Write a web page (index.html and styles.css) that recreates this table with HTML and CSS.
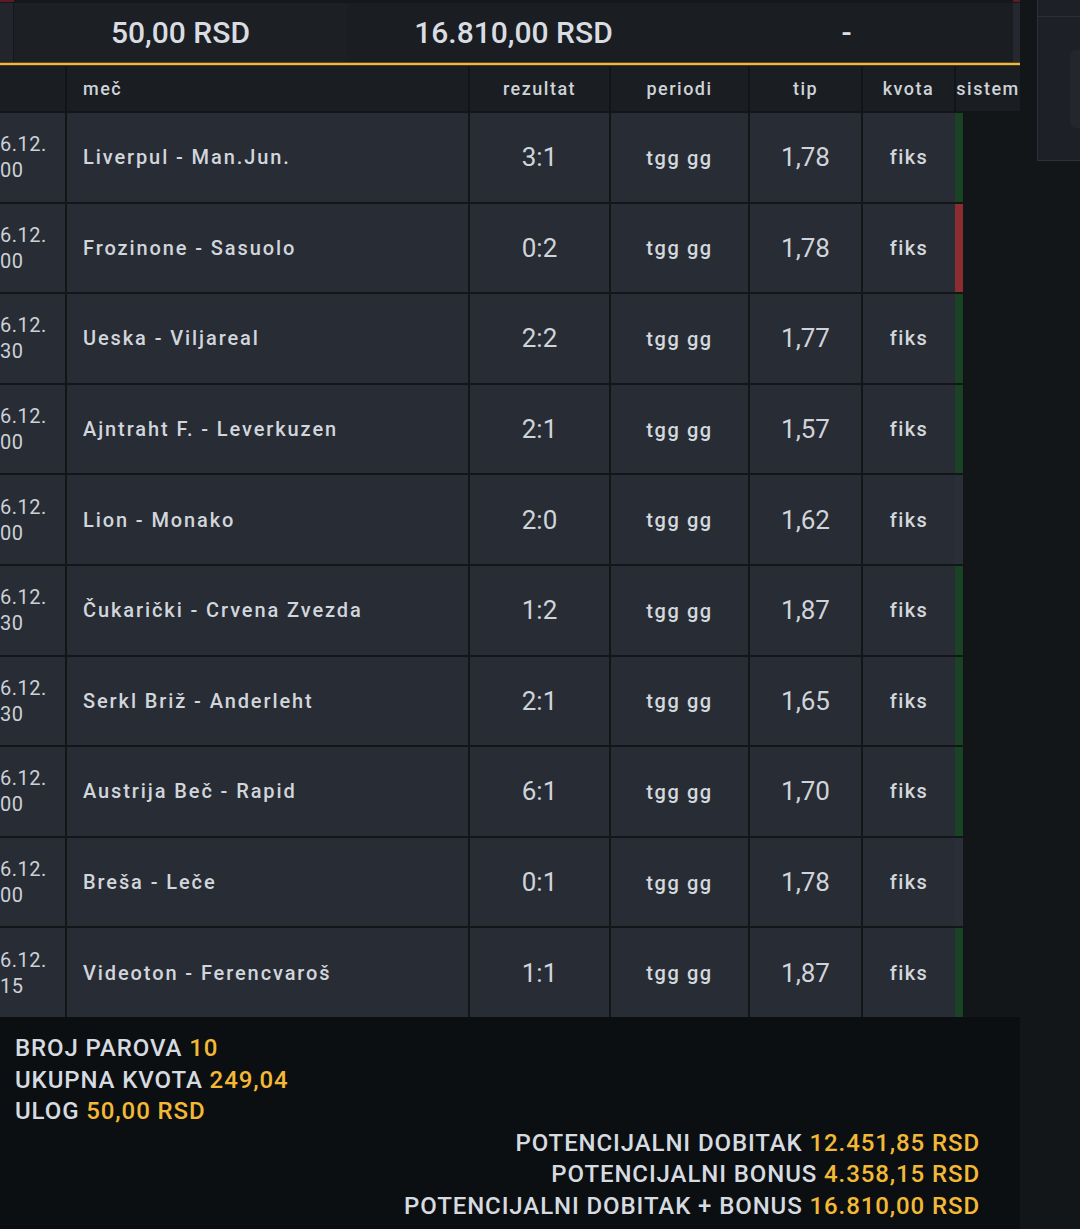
FILE: index.html
```html
<!DOCTYPE html>
<html lang="sr">
<head>
<meta charset="utf-8">
<title>Tiket</title>
<link rel="stylesheet" href="styles.css">
</head>
<body>
<div class="page">
  <main class="ticket">
    <div class="strip"><span class="strip-red"></span><span class="strip-red strip-red-r"></span></div>
    <div class="summary">
      <div class="sum-edge"></div>
      <div class="sum-cell sum-first">50,00 RSD</div>
      <div class="sum-cell">16.810,00 RSD</div>
      <div class="sum-cell">-</div>
      <div class="sum-scroll"></div>
    </div>
    <div class="gold"></div>
    <div class="thead">
      <div class="th"></div>
      <div class="th th-left">meč</div>
      <div class="th">rezultat</div>
      <div class="th">periodi</div>
      <div class="th">tip</div>
      <div class="th">kvota</div>
      <div class="th">sistem</div>
    </div>
    <div class="rows">
      <div class="row">
        <div class="cell date"><span>6.12.</span><span>00</span></div>
        <div class="cell name">Liverpul - Man.Jun.</div>
        <div class="cell num">3:1</div>
        <div class="cell per">tgg gg</div>
        <div class="cell num">1,78</div>
        <div class="cell kv win">fiks</div>
      </div>
      <div class="row">
        <div class="cell date"><span>6.12.</span><span>00</span></div>
        <div class="cell name">Frozinone - Sasuolo</div>
        <div class="cell num">0:2</div>
        <div class="cell per">tgg gg</div>
        <div class="cell num">1,78</div>
        <div class="cell kv lose">fiks</div>
      </div>
      <div class="row">
        <div class="cell date"><span>6.12.</span><span>30</span></div>
        <div class="cell name">Ueska - Viljareal</div>
        <div class="cell num">2:2</div>
        <div class="cell per">tgg gg</div>
        <div class="cell num">1,77</div>
        <div class="cell kv win">fiks</div>
      </div>
      <div class="row">
        <div class="cell date"><span>6.12.</span><span>00</span></div>
        <div class="cell name">Ajntraht F. - Leverkuzen</div>
        <div class="cell num">2:1</div>
        <div class="cell per">tgg gg</div>
        <div class="cell num">1,57</div>
        <div class="cell kv win">fiks</div>
      </div>
      <div class="row">
        <div class="cell date"><span>6.12.</span><span>00</span></div>
        <div class="cell name">Lion - Monako</div>
        <div class="cell num">2:0</div>
        <div class="cell per">tgg gg</div>
        <div class="cell num">1,62</div>
        <div class="cell kv none">fiks</div>
      </div>
      <div class="row">
        <div class="cell date"><span>6.12.</span><span>30</span></div>
        <div class="cell name">Čukarički - Crvena Zvezda</div>
        <div class="cell num">1:2</div>
        <div class="cell per">tgg gg</div>
        <div class="cell num">1,87</div>
        <div class="cell kv win">fiks</div>
      </div>
      <div class="row">
        <div class="cell date"><span>6.12.</span><span>30</span></div>
        <div class="cell name">Serkl Briž - Anderleht</div>
        <div class="cell num">2:1</div>
        <div class="cell per">tgg gg</div>
        <div class="cell num">1,65</div>
        <div class="cell kv win">fiks</div>
      </div>
      <div class="row">
        <div class="cell date"><span>6.12.</span><span>00</span></div>
        <div class="cell name">Austrija Beč - Rapid</div>
        <div class="cell num">6:1</div>
        <div class="cell per">tgg gg</div>
        <div class="cell num">1,70</div>
        <div class="cell kv win">fiks</div>
      </div>
      <div class="row">
        <div class="cell date"><span>6.12.</span><span>00</span></div>
        <div class="cell name">Breša - Leče</div>
        <div class="cell num">0:1</div>
        <div class="cell per">tgg gg</div>
        <div class="cell num">1,78</div>
        <div class="cell kv none">fiks</div>
      </div>
      <div class="row">
        <div class="cell date"><span>6.12.</span><span>15</span></div>
        <div class="cell name">Videoton - Ferencvaroš</div>
        <div class="cell num">1:1</div>
        <div class="cell per">tgg gg</div>
        <div class="cell num">1,87</div>
        <div class="cell kv win">fiks</div>
      </div>
    </div>
    <footer class="totals">
      <div class="tl">BROJ PAROVA <span class="gv">10</span></div>
      <div class="tl">UKUPNA KVOTA <span class="gv">249,04</span></div>
      <div class="tl">ULOG <span class="gv">50,00 RSD</span></div>
      <div class="tl tr">POTENCIJALNI DOBITAK <span class="gv">12.451,85 RSD</span></div>
      <div class="tl tr">POTENCIJALNI BONUS <span class="gv">4.358,15 RSD</span></div>
      <div class="tl tr">POTENCIJALNI DOBITAK + BONUS <span class="gv">16.810,00 RSD</span></div>
    </footer>
  </main>
  <aside class="side">
    <div class="side-top"></div>
    <div class="side-body"><div class="side-btn"></div></div>
  </aside>
</div>
</body>
</html>
```
FILE: styles.css
```css
html, body {
  margin: 0;
  padding: 0;
  background: #131619;
  overflow: hidden;
}
body {
  font-family: Roboto, "Liberation Sans", sans-serif;
  color: #d3d8dd;
  width: 1080px;
  height: 1229px;
}
.page {
  display: flex;
  align-items: flex-start;
  gap: 17px;
  height: 1229px;
}
.ticket {
  width: 1020px;
  flex: none;
  display: flex;
  flex-direction: column;
  height: 1229px;
}
.strip {
  height: 3px;
  background: #15181b;
  display: flex;
  justify-content: space-between;
}
.strip-red {
  width: 14px;
  height: 2px;
  background: #5a1d25;
}
.strip-red-r {
  width: 7px;
}
.summary {
  height: 59px;
  display: grid;
  grid-template-columns: 14px 333px 333px 333px 7px;
  background: #1a1d21;
}
.sum-edge {
  background: #22262c;
  border-right: 1px solid #15181b;
}
.sum-cell {
  display: flex;
  align-items: center;
  justify-content: center;
  font-size: 30px;
  font-weight: 500;
  color: #d9dde2;
}
.sum-first {
  background: #1c1f24;
}
.sum-scroll {
  background: #25292f;
}
.gold {
  height: 4px;
  background: linear-gradient(to bottom, #5e4619 0, #5e4619 25%, #e2ad3c 25%, #f4c65a 55%, #d9a43a 75%, #4a3714 75%, #4a3714 100%);
}
.thead {
  height: 45px;
  display: grid;
  grid-template-columns: 65px 401px 139px 137px 111px 91px 64px;
  column-gap: 2px;
  background: #121417;
}
.th {
  background: #1a1d21;
  display: flex;
  align-items: center;
  justify-content: center;
  font-size: 18px;
  font-weight: 500;
  letter-spacing: 1.5px;
  color: #ced3d8;
}
.th-left {
  justify-content: flex-start;
  padding-left: 16px;
}
.rows {
  margin-top: 2px;
  display: flex;
  flex-direction: column;
  gap: 2px;
}
.row {
  height: 88.6px;
  display: grid;
  grid-template-columns: 65px 401px 139px 137px 111px 100px;
  column-gap: 2px;
}
.cell {
  background: #282c34;
  display: flex;
  align-items: center;
  justify-content: center;
  overflow: hidden;
}
.date {
  flex-direction: column;
  align-items: flex-start;
  font-size: 20px;
  line-height: 26px;
  letter-spacing: 0.5px;
  color: #ccd1d7;
  white-space: nowrap;
}
.name {
  justify-content: flex-start;
  padding-left: 16px;
  font-size: 20px;
  font-weight: 500;
  letter-spacing: 1.9px;
  white-space: nowrap;
  color: #d1d6dc;
}
.num {
  font-size: 26px;
  font-weight: 400;
  color: #cfd4da;
}
.per {
  font-size: 20px;
  font-weight: 500;
  letter-spacing: 1.6px;
  padding-top: 1px;
}
.kv {
  font-size: 20px;
  font-weight: 500;
  letter-spacing: 1.4px;
  border-right: 8px solid #2a2e36;
  box-sizing: border-box;
}
.win { border-right-color: #1a4325; }
.lose { border-right-color: #8c2e2f; }
.none { border-right-color: #2a2e36; }
.totals {
  flex: 1;
  background: #0c0f12;
  padding: 16px 40px 0 15px;
  font-size: 24px;
  font-weight: 500;
  letter-spacing: 0.9px;
  line-height: 31.6px;
  color: #d6dbe0;
}
.tr {
  text-align: right;
}
.gv {
  color: #f3b935;
}
.side {
  width: 60px;
  flex: none;
  height: 161px;
  background: #1d2026;
  border: 1px solid #2c3037;
  border-top: none;
  box-sizing: border-box;
  display: flex;
  flex-direction: column;
}
.side-top {
  height: 16px;
  border-bottom: 1px solid #2c3037;
}
.side-body {
  flex: 1;
  padding: 33px 0 0 32px;
}
.side-btn {
  height: 78px;
  background: #23272d;
  border-radius: 6px 0 0 6px;
}
```
